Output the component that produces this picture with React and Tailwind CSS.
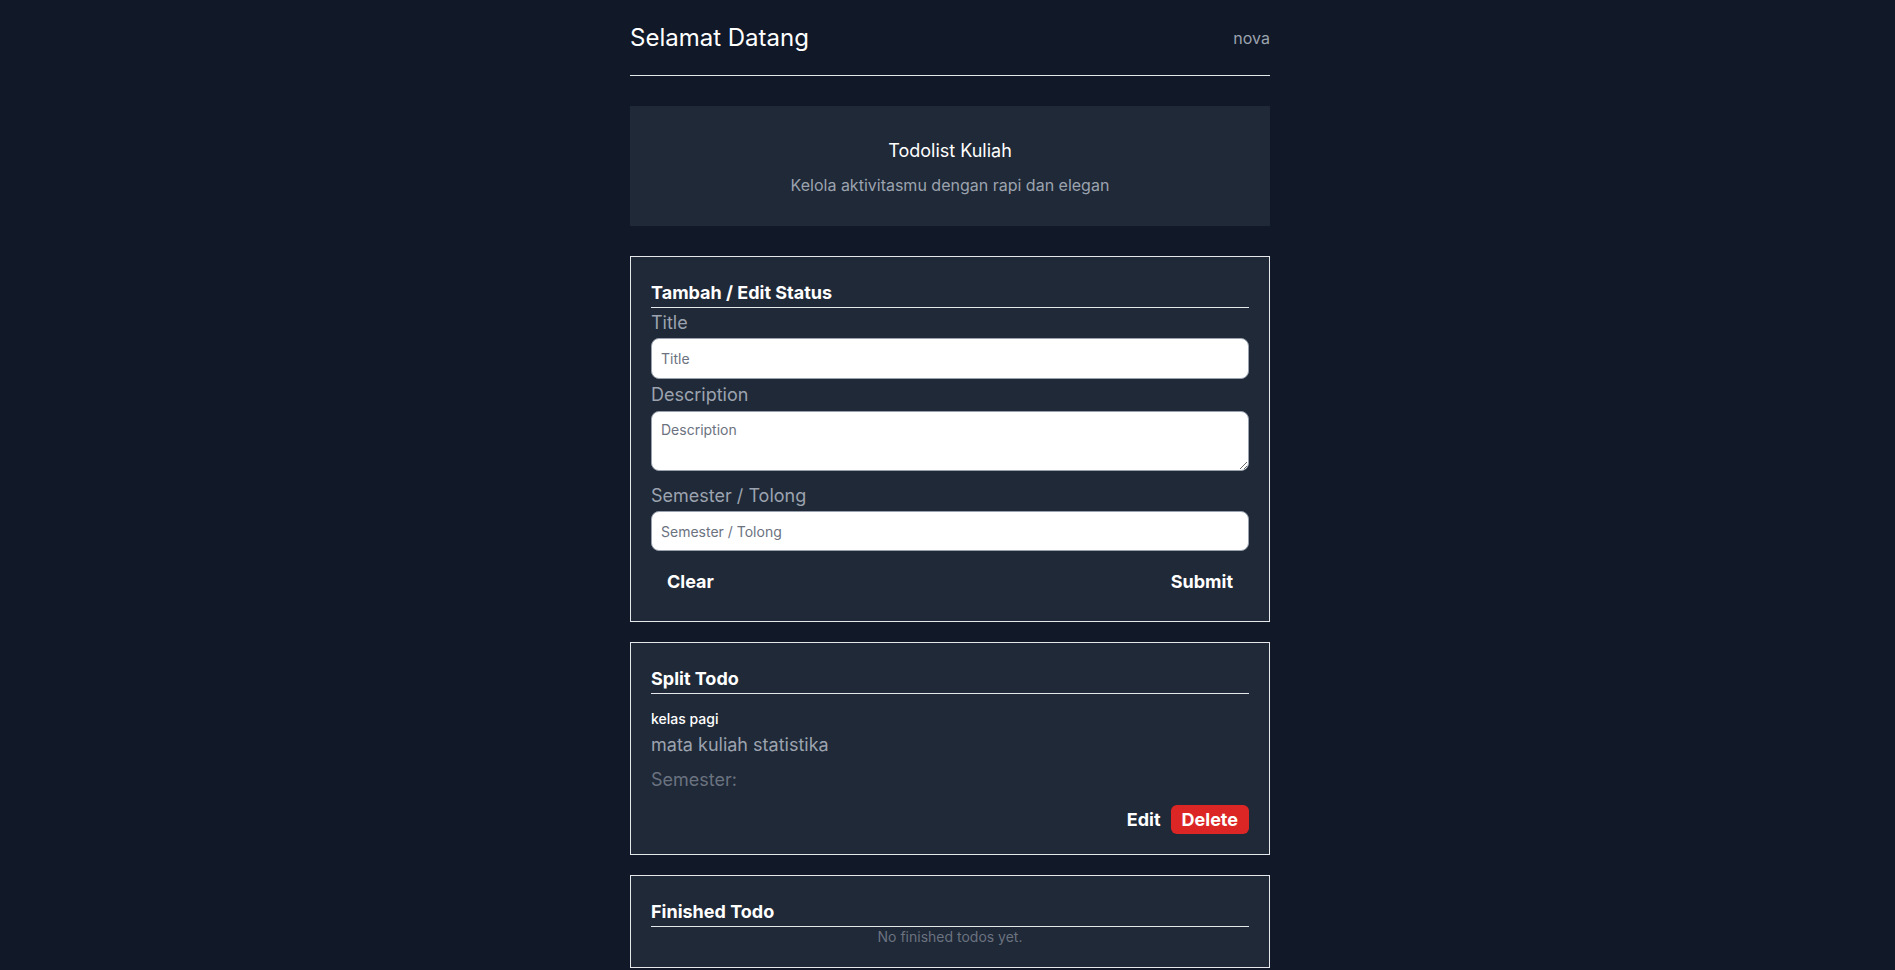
import React, { useState } from 'react';

const font = { fontFamily: 'Inter, "Noto Sans", sans-serif' };

function Card({ title, children, className = '' }) {
  return (
    <div className={`border border-gray-200 bg-[#1f2937] p-5 ${className}`}>
      <h2 className="pt-[2px] text-lg leading-7 font-bold text-white border-b border-gray-200">{title}</h2>
      {children}
    </div>
  );
}

const inputCls =
  'block w-full px-[9px] rounded-lg bg-white border border-gray-400 text-sm text-gray-900 placeholder:text-[#6b7280] outline-none';

export default function App() {
  const [form, setForm] = useState({ title: '', description: '', semester: '' });
  const todos = [{ id: 1, title: 'kelas pagi', description: 'mata kuliah statistika', semester: '' }];
  const finished = [];

  const clear = () => setForm({ title: '', description: '', semester: '' });

  return (
    <div className="min-h-screen bg-[#111827] pl-[5px]" style={font}>
      <div className="w-[640px] mx-auto">
        <header className="flex items-center justify-between pt-[22px] pb-[21px] border-b border-gray-200">
          <h1 className="text-2xl text-white">Selamat Datang</h1>
          <span className="text-base text-[#9ca3af]">nova</span>
        </header>

        <div className="mt-[30px] bg-[#1f2937] pt-[31px] pb-[29px] text-center">
          <h2 className="text-lg leading-7 text-white">Todolist Kuliah</h2>
          <p className="mt-2 text-base text-[#9ca3af]">Kelola aktivitasmu dengan rapi dan elegan</p>
        </div>

        <Card title="Tambah / Edit Status" className="mt-[30px]">
          <label className="block mt-[1px] text-lg leading-7 text-[#9ca3af]">Title</label>
          <input
            className={`${inputCls} mt-[1px] h-[41px]`}
            placeholder="Title"
            value={form.title}
            onChange={e => setForm({ ...form, title: e.target.value })}
          />
          <label className="block mt-[2px] text-lg leading-7 text-[#9ca3af]">Description</label>
          <textarea
            className={`${inputCls} mt-[2px] h-[60px] py-2`}
            placeholder="Description"
            value={form.description}
            onChange={e => setForm({ ...form, description: e.target.value })}
          />
          <label className="block mt-[11px] text-lg leading-7 text-[#9ca3af]">Semester / Tolong</label>
          <input
            className={`${inputCls} mt-[1px] h-[40px]`}
            placeholder="Semester / Tolong"
            value={form.semester}
            onChange={e => setForm({ ...form, semester: e.target.value })}
          />
          <div className="flex justify-between mt-[13px] mb-[1px]">
            <button onClick={clear} className="px-4 py-1 text-lg leading-7 font-bold text-white">Clear</button>
            <button className="px-4 py-1 text-lg leading-7 font-bold text-white">Submit</button>
          </div>
        </Card>

        <Card title="Split Todo" className="mt-5">
          {todos.map(todo => (
            <div key={todo.id}>
              <p className="mt-[15px] text-sm font-medium text-white">{todo.title}</p>
              <p className="mt-[2px] text-lg leading-7 text-[#9ca3af]">{todo.description}</p>
              <p className="mt-[7px] text-lg leading-7 text-[#6b7280]">Semester: {todo.semester}</p>
              <div className="flex justify-end items-center gap-[6px] mt-[11px]">
                <button className="px-1 text-lg leading-7 font-bold text-white">Edit</button>
                <button className="h-[29px] px-[11px] rounded-md bg-[#dc2626] text-lg leading-7 font-bold text-white">Delete</button>
              </div>
            </div>
          ))}
        </Card>

        <Card title="Finished Todo" className="mt-5">
          {finished.length === 0 && (
            <p className="text-center text-sm text-[#6b7280]">No finished todos yet.</p>
          )}
        </Card>
      </div>
    </div>
  );
}
